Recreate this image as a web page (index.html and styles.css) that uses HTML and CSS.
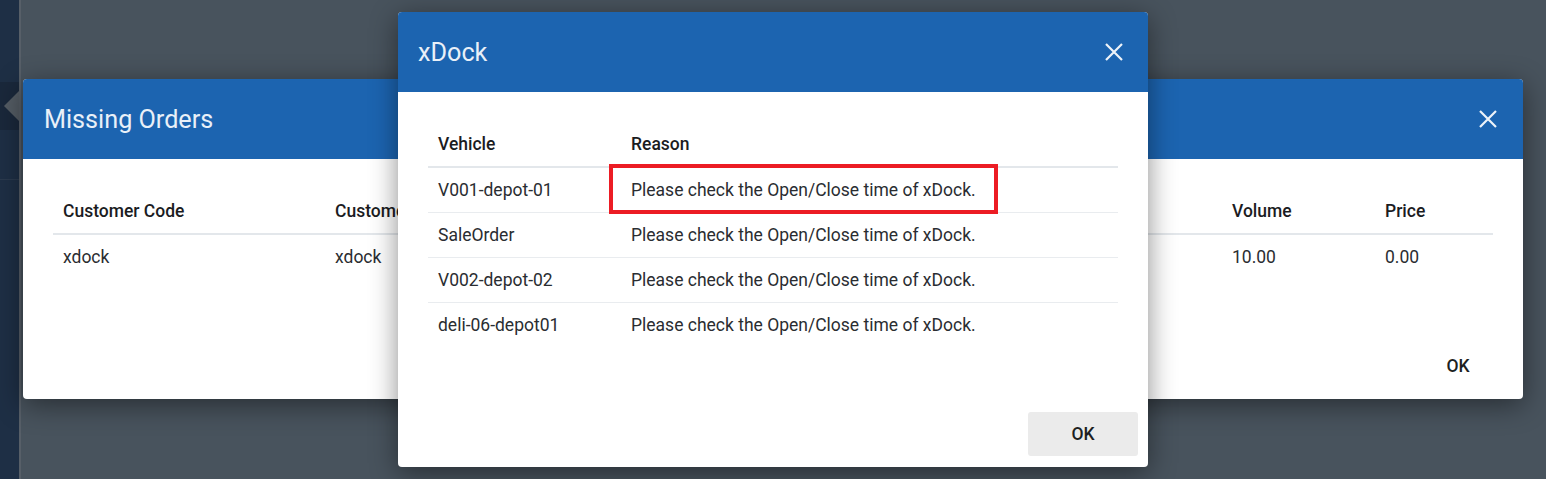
FILE: index.html
```html
<!DOCTYPE html>
<html lang="en">
<head>
<meta charset="utf-8">
<title>xDock</title>
<link rel="stylesheet" href="styles.css">
</head>
<body>
<div class="app">
  <aside class="sidebar">
    <div class="side-top"></div>
    <div class="side-item active"><span class="pointer"></span></div>
    <div class="side-item"></div>
  </aside>
  <main class="backdrop"></main>

  <section class="modal modal-orders">
    <header class="modal-head">
      <h2 class="modal-title">Missing Orders</h2>
      <svg class="close" width="20" height="20" viewBox="0 0 20 20"><path d="M2 2 L18 18 M18 2 L2 18" /></svg>
    </header>
    <div class="modal-body">
      <table class="grid">
        <colgroup>
          <col class="c-code"><col class="c-name"><col class="c-addr"><col class="c-weight"><col class="c-vol"><col class="c-price">
        </colgroup>
        <thead>
          <tr><th>Customer Code</th><th>Customer Name</th><th>Address</th><th>Weight</th><th>Volume</th><th>Price</th></tr>
        </thead>
        <tbody>
          <tr><td>xdock</td><td>xdock</td><td>xdock</td><td>0.00</td><td>10.00</td><td>0.00</td></tr>
        </tbody>
      </table>
    </div>
    <footer class="modal-foot">
      <button class="btn btn-plain">OK</button>
    </footer>
  </section>

  <section class="modal modal-xdock">
    <header class="modal-head">
      <h2 class="modal-title">xDock</h2>
      <svg class="close" width="20" height="20" viewBox="0 0 20 20"><path d="M2 2 L18 18 M18 2 L2 18" /></svg>
    </header>
    <div class="modal-body">
      <table class="grid">
        <colgroup><col class="c-vehicle"><col></colgroup>
        <thead>
          <tr><th>Vehicle</th><th>Reason</th></tr>
        </thead>
        <tbody>
          <tr><td>V001-depot-01</td><td><span class="marked">Please check the Open/Close time of xDock.</span></td></tr>
          <tr><td>SaleOrder</td><td>Please check the Open/Close time of xDock.</td></tr>
          <tr><td>V002-depot-02</td><td>Please check the Open/Close time of xDock.</td></tr>
          <tr><td>deli-06-depot01</td><td>Please check the Open/Close time of xDock.</td></tr>
        </tbody>
      </table>
    </div>
    <footer class="modal-foot">
      <button class="btn btn-gray">OK</button>
    </footer>
  </section>
</div>
</body>
</html>
```

FILE: styles.css
```css
* { box-sizing: border-box; }

html, body {
  margin: 0;
  padding: 0;
}

body {
  width: 1546px;
  height: 479px;
  overflow: hidden;
  font-family: Roboto, "Liberation Sans", Arial, sans-serif;
  color: #212529;
  background: #48535d;
}

.app {
  position: relative;
  display: flex;
  width: 1546px;
  height: 479px;
}

.sidebar {
  width: 21px;
  height: 100%;
  background: #1e2f45;
  border-right: 2px solid #575f68;
  display: flex;
  flex-direction: column;
}

.side-top {
  height: 82px;
}

.side-item {
  position: relative;
  height: 48px;
}

.side-item.active {
  background: #1a283b;
}

.side-item + .side-item {
  height: 50px;
  border-bottom: 1px solid #2b3a4e;
}

.pointer {
  position: absolute;
  right: 0;
  top: 9px;
  width: 0;
  height: 0;
  border-top: 15px solid transparent;
  border-bottom: 15px solid transparent;
  border-right: 15px solid #545c64;
}

.backdrop {
  flex: 1;
  background: #48535d;
}

.modal {
  position: absolute;
  background: #fff;
  border-radius: 4px;
  overflow: hidden;
  display: flex;
  flex-direction: column;
  box-shadow: 0 6px 28px rgba(0, 0, 0, 0.45);
}

.modal-orders {
  left: 23px;
  top: 79px;
  width: 1500px;
}

.modal-xdock {
  left: 398px;
  top: 12px;
  width: 750px;
}

.modal-head {
  height: 80px;
  background: #1c64b0;
  display: flex;
  align-items: center;
  justify-content: space-between;
  padding: 0 24px 0 20px;
}

.modal-orders .modal-head {
  padding-left: 21px;
  padding-right: 25px;
}

.modal-title {
  margin: 0;
  font-size: 25.2px;
  font-weight: 400;
  color: #e9f0f8;
}

.close path {
  stroke: #eef3f9;
  stroke-width: 2.2;
  fill: none;
}

.modal-body {
  padding: 30px 30px 55px;
}

.grid {
  width: 100%;
  border-collapse: collapse;
  table-layout: fixed;
  font-size: 17.5px;
  line-height: 20px;
}

.grid th {
  text-align: left;
  font-weight: 500;
  padding: 12px 10px;
  border-bottom: 2px solid #e3e7eb;
  color: #1b1c1f;
}

.grid td {
  padding: 12px 10px;
  border-bottom: 1px solid #e9ecef;
  color: #2a2d31;
  white-space: nowrap;
}

.grid tbody tr:last-child td {
  border-bottom: none;
}

.c-code { width: 272px; }
.c-name { width: 272px; }
.c-addr { width: 350px; }
.c-weight { width: 275px; }
.c-vol { width: 153px; }
.c-price { width: 118px; }

.c-vehicle { width: 193px; }

.marked {
  position: relative;
}

.marked::after {
  content: "";
  position: absolute;
  left: -22px;
  right: -22px;
  top: -16px;
  bottom: -14px;
  border: 4px solid #ec1c24;
}

.modal-foot {
  display: flex;
  justify-content: flex-end;
  padding: 10px 10px 11px;
}

.btn {
  width: 110px;
  height: 44px;
  border: none;
  border-radius: 3px;
  font-family: inherit;
  font-size: 17.5px;
  font-weight: 500;
  color: #1d1f22;
  cursor: pointer;
}

.btn-plain {
  background: transparent;
}

.btn-gray {
  background: #ebebeb;
}
```
